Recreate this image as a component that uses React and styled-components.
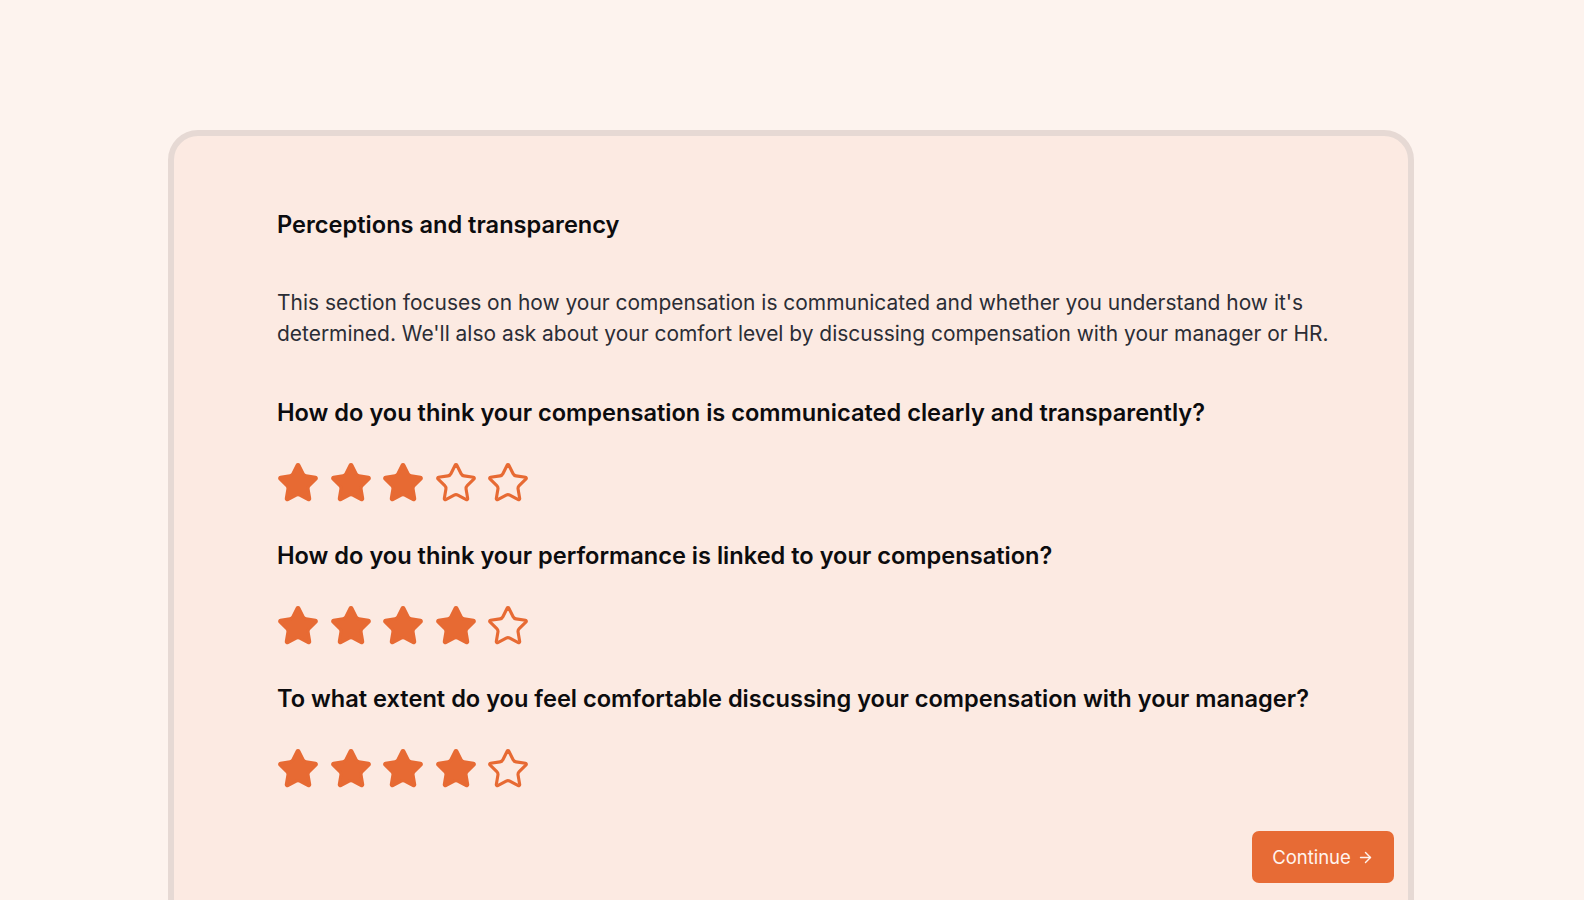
import React from "react";
import styled, { createGlobalStyle } from "styled-components";

const GlobalStyle = createGlobalStyle`
  html, body { margin: 0; padding: 0; background: #fdf3ee; }
  body { font-family: Inter, "Noto Sans", sans-serif; -webkit-font-smoothing: antialiased; }
  * { box-sizing: border-box; }
`;

const Page = styled.div`
  padding: 130px 0 0 168px;
  overflow: hidden;
  height: 900px;
`;

const Card = styled.section`
  width: 1246px;
  min-height: 900px;
  background: #fceae2;
  border: 6px solid #e6d9d4;
  border-radius: 30px;
  padding: 75px 14px 80px 103px;
  display: flex;
  flex-direction: column;
`;

const Title = styled.h2`
  margin: 0;
  font-size: 23.6px;
  line-height: 28px;
  font-weight: 600;
  color: #0c0c0e;
`;

const Description = styled.p`
  margin: 48px 0 0;
  font-size: 20.95px;
  line-height: 31px;
  font-weight: 400;
  color: #2b2d35;
`;

const Questions = styled.div`
  margin-top: 50px;
  display: flex;
  flex-direction: column;
  gap: 37px;
`;

const QuestionBlock = styled.div`
  display: flex;
  flex-direction: column;
  gap: 34px;
`;

const QuestionText = styled.h3`
  margin: 0;
  font-size: 23.6px;
  line-height: 28px;
  font-weight: 600;
  color: #0c0c0e;
`;

const Stars = styled.div`
  display: flex;
  gap: 8.5px;
  height: 44px;
  margin-left: -1px;
`;

const StarIcon = styled.svg`
  width: 44px;
  height: 44px;
  display: block;
  color: #e76a33;
`;

const Footer = styled.div`
  display: flex;
  justify-content: flex-end;
  margin-top: 40px;
`;

const Button = styled.button`
  width: 142px;
  height: 52px;
  border: none;
  border-radius: 7px;
  background: #e76b35;
  color: #fff4ee;
  font-family: Inter, sans-serif;
  font-size: 18.5px;
  font-weight: 400;
  display: inline-flex;
  align-items: center;
  justify-content: center;
  gap: 6px;
  cursor: pointer;
`;

const STAR_PATH =
  "M11.525 2.295a.53.53 0 0 1 .95 0l2.31 4.679a2.123 2.123 0 0 0 1.595 1.16l5.166.756a.53.53 0 0 1 .294.904l-3.736 3.638a2.123 2.123 0 0 0-.611 1.878l.882 5.14a.53.53 0 0 1-.771.56l-4.618-2.428a2.122 2.122 0 0 0-1.973 0L6.396 21.01a.53.53 0 0 1-.77-.56l.881-5.139a2.122 2.122 0 0 0-.611-1.879L2.16 9.795a.53.53 0 0 1 .294-.906l5.165-.755a2.122 2.122 0 0 0 1.597-1.16z";

function Star({ filled }) {
  return (
    <StarIcon viewBox="0 0 24 24" aria-hidden="true">
      <path
        d={STAR_PATH}
        fill={filled ? "currentColor" : "none"}
        stroke="currentColor"
        strokeWidth="1.7"
        strokeLinejoin="round"
        strokeLinecap="round"
      />
    </StarIcon>
  );
}

function Rating({ value }) {
  return (
    <Stars>
      {[1, 2, 3, 4, 5].map((i) => (
        <Star key={i} filled={i <= value} />
      ))}
    </Stars>
  );
}

const questions = [
  { text: "How do you think your compensation is communicated clearly and transparently?", value: 3 },
  { text: "How do you think your performance is linked to your compensation?", value: 4 },
  { text: "To what extent do you feel comfortable discussing your compensation with your manager?", value: 4 },
];

export default function App() {
  return (
    <>
      <GlobalStyle />
      <Page>
        <Card>
          <Title>Perceptions and transparency</Title>
          <Description>
            This section focuses on how your compensation is communicated and whether you understand how it's
            determined. We'll also ask about your comfort level by discussing compensation with your manager or HR.
          </Description>
          <Questions>
            {questions.map((q) => (
              <QuestionBlock key={q.text}>
                <QuestionText>{q.text}</QuestionText>
                <Rating value={q.value} />
              </QuestionBlock>
            ))}
          </Questions>
          <Footer>
            <Button type="button">
              Continue
              <svg width="17" height="17" viewBox="0 0 24 24" fill="none" stroke="currentColor" strokeWidth="2" strokeLinecap="round" strokeLinejoin="round">
                <path d="M5 12h14" />
                <path d="m12 5 7 7-7 7" />
              </svg>
            </Button>
          </Footer>
        </Card>
      </Page>
    </>
  );
}
